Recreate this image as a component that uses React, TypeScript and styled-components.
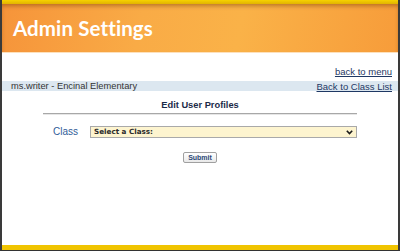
import React from 'react';
import styled, { createGlobalStyle } from 'styled-components';

const Global = createGlobalStyle`
  html, body { margin: 0; padding: 0; background: #fff; }
  * { box-sizing: border-box; }
`;

const Frame = styled.div`
  display: flex; flex-direction: column;
  width: 400px; height: 251px;
  border-left: 2px solid #3a3a3a;
  border-right: 2px solid #3a3a3a;
  border-bottom: 1px solid #333;
  font-family: 'Liberation Sans', Arial, sans-serif;
  background: #fff;
  overflow: hidden;
`;

const TopStripe = styled.div`
  height: 4px; flex: none;
  background: linear-gradient(to bottom, #f6d200, #e2b300);
`;

const Header = styled.header`
  display: flex; align-items: center;
  height: 49px; flex: none;
  padding-left: 11px;
  background: linear-gradient(100deg, #f6943a 0%, #f9ab46 35%, #fab248 60%, #f79c3a 100%);
  box-shadow: inset 0 3px 4px -1px rgba(110, 55, 0, 0.45);
  border-bottom: 1px solid #fde1bd;
`;

const Title = styled.h1`
  margin: 0;
  font-family: Lato, 'Open Sans', sans-serif;
  font-weight: 700;
  font-size: 20.5px;
  color: #fff;
  letter-spacing: 0.1px;
`;

const Content = styled.main`
  flex: 1;
  display: flex; flex-direction: column;
`;

const MenuRow = styled.div`
  margin-top: 11px;
  height: 12px; line-height: 12px;
  padding-right: 6px;
  text-align: right;
`;

const NavLink = styled.a`
  font-size: 9.5px;
  color: #1f3864;
  text-decoration: underline;
  cursor: pointer;
`;

const InfoBar = styled.div`
  display: flex; justify-content: space-between; align-items: center;
  margin-top: 5px;
  height: 10px;
  padding: 0 6px 0 9px;
  background: #dce7f0;
  font-size: 9.3px;
  color: #333;
`;

const SectionTitle = styled.h2`
  margin: 8px 0 0;
  height: 12px; line-height: 12px;
  text-align: center;
  font-size: 9.3px;
  font-weight: 700;
  color: #1b2a47;
`;

const Rule = styled.hr`
  margin: 2px 41px 0;
  height: 2px;
  border: 0;
  border-top: 1px solid #a8a8a8;
  border-bottom: 1px solid #e6e6e6;
`;

const FormRow = styled.div`
  display: flex; align-items: center;
  margin-top: 10px;
  height: 13px;
  padding-left: 51px;
`;

const Label = styled.label`
  width: 37px;
  font-size: 10px;
  line-height: 13px;
  color: #2f5c98;
`;

const SelectWrap = styled.div`
  position: relative;
  width: 267px; height: 12px;
`;

const Select = styled.select`
  display: block;
  appearance: none;
  width: 100%; height: 12px;
  margin: 0; padding: 0 0 0 3px;
  background: #fdf4cf;
  border: 1px solid #a9a9a9;
  border-radius: 0;
  font-family: 'DejaVu Sans', Verdana, sans-serif;
  font-size: 7.2px;
  line-height: 10px;
  font-weight: 700;
  color: #2a2a2a;
  outline: none;
`;

const Chevron = styled.svg`
  position: absolute;
  right: 4px; top: 4px;
  pointer-events: none;
`;

const ButtonRow = styled.div`
  display: flex; justify-content: center;
  margin-top: 14px;
`;

const SubmitButton = styled.button`
  width: 34px; height: 11px;
  margin: 0; padding: 0;
  display: flex; align-items: center; justify-content: center;
  background: linear-gradient(to bottom, #ffffff, #e9e9e9);
  border: 1px solid #a0a0a0;
  border-radius: 2px;
  font-family: 'Liberation Sans', Arial, sans-serif;
  font-size: 7px;
  font-weight: 700;
  color: #2b4a78;
`;

const BottomStripe = styled.div`
  height: 5px; flex: none;
  background: #f0c400;
`;

export default function App() {
  return (
    <>
      <Global />
      <Frame>
        <TopStripe />
        <Header>
          <Title>Admin Settings</Title>
        </Header>
        <Content>
          <MenuRow>
            <NavLink>back to menu</NavLink>
          </MenuRow>
          <InfoBar>
            <span>ms.writer - Encinal Elementary</span>
            <NavLink>Back to Class List</NavLink>
          </InfoBar>
          <SectionTitle>Edit User Profiles</SectionTitle>
          <Rule />
          <FormRow>
            <Label>Class</Label>
            <SelectWrap>
              <Select defaultValue="">
                <option value="">Select a Class:</option>
              </Select>
              <Chevron width="7" height="5" viewBox="0 0 7 5">
                <path d="M0.8 0.8 L3.5 3.6 L6.2 0.8" fill="none" stroke="#1a1a1a" strokeWidth="1.6" />
              </Chevron>
            </SelectWrap>
          </FormRow>
          <ButtonRow>
            <SubmitButton>Submit</SubmitButton>
          </ButtonRow>
        </Content>
        <BottomStripe />
      </Frame>
    </>
  );
}
